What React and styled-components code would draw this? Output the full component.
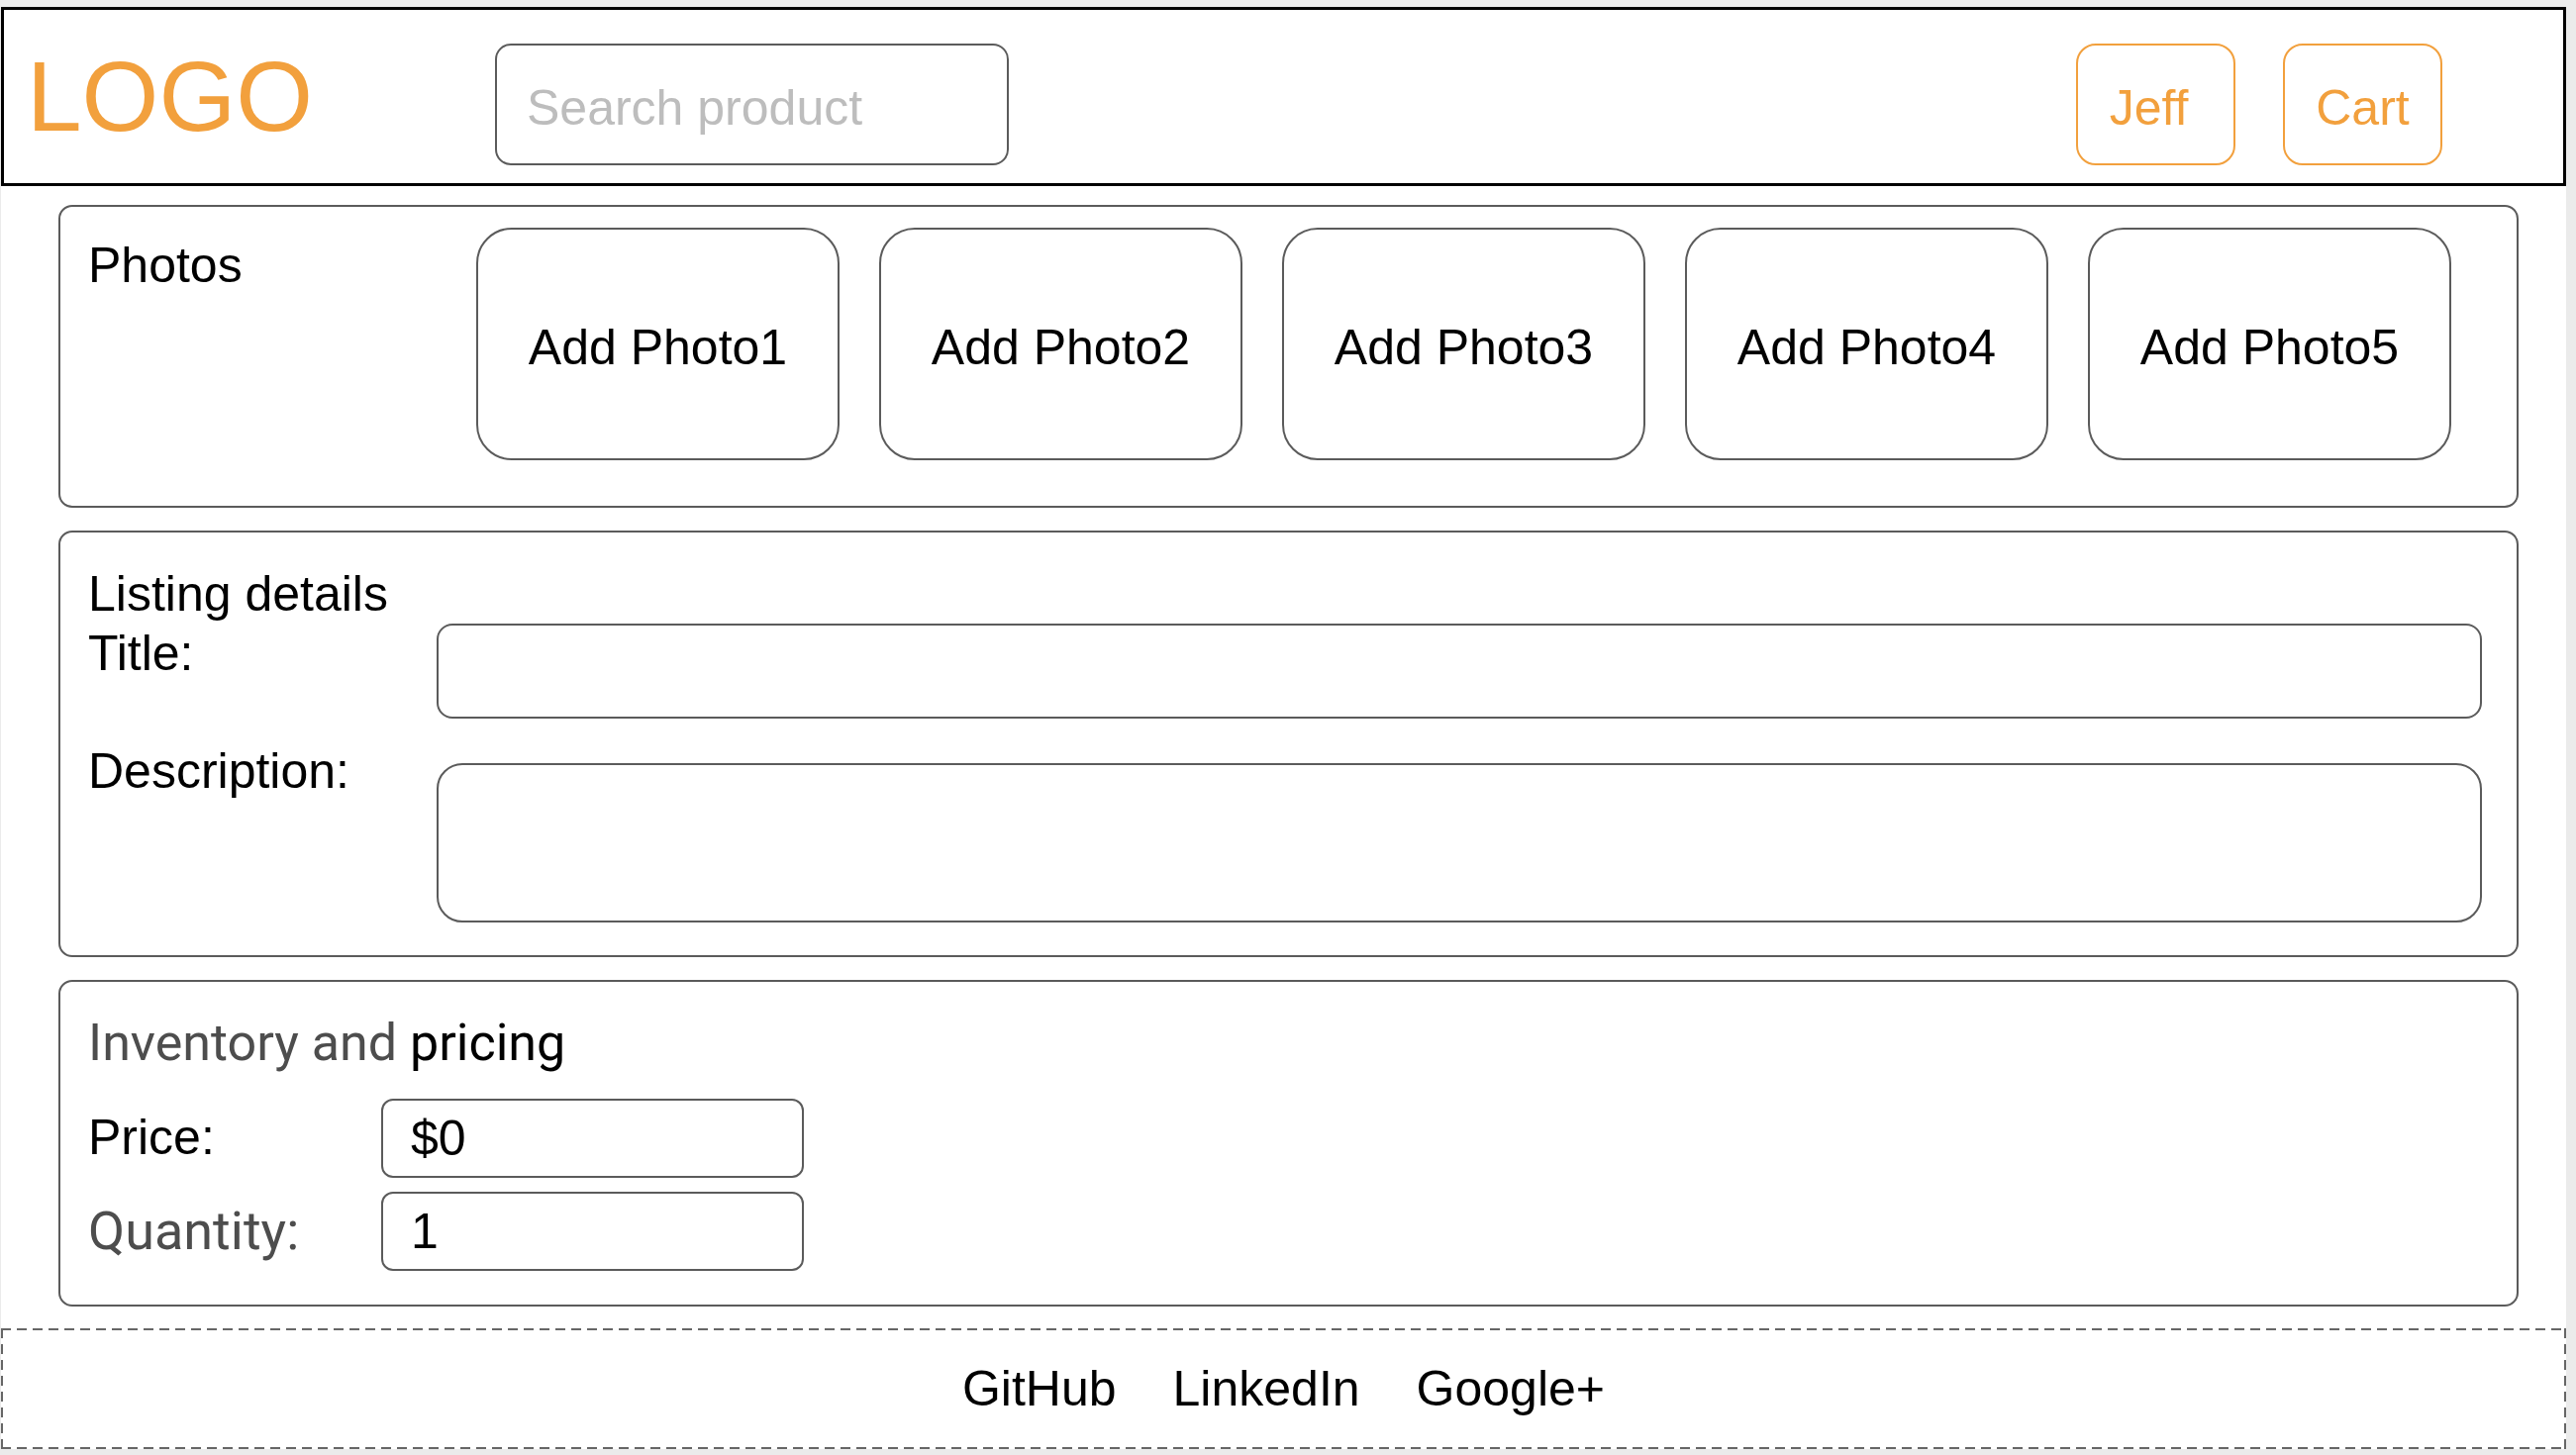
import React from "react"
import styled, { createGlobalStyle } from "styled-components"

const ORANGE = "#f2a03d"
const LINE = "#5b5b5b"
const MUTED = "#4d4d4d"
const SANS = `"Liberation Sans", Arial, sans-serif`
const ROBOTO = `Roboto, "Liberation Sans", sans-serif`

const GlobalStyle = createGlobalStyle`
  * {
    box-sizing: border-box;
  }
  body {
    margin: 0;
    background: #ebebeb;
    font-family: ${SANS};
  }
`

const Canvas = styled.div`
  width: 2591px;
  margin: 7px 0 0 1px;
  background: #fff;
`

const Header = styled.header`
  display: flex;
  align-items: center;
  height: 181px;
  padding-left: 23px;
  border: 3px solid #000;
`

const Logo = styled.div`
  flex: none;
  width: 473px;
  font: 400 100px/115px ${SANS};
  color: ${ORANGE};
`

const Search = styled.input`
  flex: none;
  width: 519px;
  height: 123px;
  margin-top: 16px;
  padding: 6px 30px 0;
  border: 2px solid ${LINE};
  border-radius: 16px;
  background: #fff;
  font: 400 50px ${SANS};
  color: #222;
  outline: none;
  &::placeholder {
    color: #bdbdbd;
  }
`

const Nav = styled.nav`
  display: flex;
  gap: 48px;
  margin: 16px 122px 0 auto;
`

const NavButton = styled.button`
  width: 161px;
  height: 123px;
  padding: 6px ${({ $nudge }) => $nudge || 0}px 0 0;
  border: 2px solid ${ORANGE};
  border-radius: 20px;
  background: #fff;
  color: ${ORANGE};
  font: 400 50px ${SANS};
  cursor: pointer;
`

const Main = styled.main`
  display: flex;
  flex-direction: column;
  gap: 23px;
  padding: 19px 48px 22px 58px;
`

const Panel = styled.section`
  border: 2px solid ${LINE};
  border-radius: 14px;
  background: #fff;
`

const PhotosPanel = styled(Panel)`
  display: flex;
  align-items: flex-start;
  padding: 21px 0 46px 28px;
`

const ListingPanel = styled(Panel)`
  display: flex;
  flex-direction: column;
  padding: 34px 35px 33px 28px;
`

const InventoryPanel = styled(Panel)`
  display: flex;
  flex-direction: column;
  padding: 33px 0 34px 28px;
`

const PanelTitle = styled.h2`
  flex: none;
  width: ${({ $width }) => ($width ? `${$width}px` : "auto")};
  margin: ${({ $offset }) => $offset || 0}px 0 0;
  font: 400 50px/57.5px ${SANS};
  color: #000;
`

const InventoryTitle = styled.h2`
  margin: 0;
  font: 400 52px/57.5px ${ROBOTO};
  color: #000;
`

const Muted = styled.span`
  color: ${MUTED};
`

const PhotoRow = styled.div`
  display: flex;
  gap: 40px;
`

const PhotoSlot = styled.button`
  display: flex;
  align-items: center;
  justify-content: center;
  width: 367px;
  height: 235px;
  padding: 6px 0 0;
  border: 2px solid ${LINE};
  border-radius: 36px;
  background: #fff;
  color: #000;
  font: 400 50px ${SANS};
  cursor: pointer;
`

const FieldRow = styled.div`
  display: flex;
  align-items: ${({ $center }) => ($center ? "center" : "flex-start")};
  margin-top: ${({ $gap }) => $gap || 0}px;
`

const FieldLabel = styled.label`
  flex: none;
  width: ${({ $width }) => $width}px;
  margin-top: ${({ $offset }) => $offset || 0}px;
  font: 400 ${({ $muted }) => ($muted ? `54px/57.5px ${ROBOTO}` : `50px/57.5px ${SANS}`)};
  color: ${({ $muted }) => ($muted ? MUTED : "#000")};
`

const TextField = styled.input`
  flex: 1;
  height: 96px;
  padding: 0 28px;
  border: 2px solid ${LINE};
  border-radius: 16px;
  background: #fff;
  font: 400 50px ${SANS};
  outline: none;
`

const TextArea = styled.textarea`
  flex: 1;
  height: 161px;
  margin-top: 20px;
  padding: 20px 28px;
  border: 2px solid ${LINE};
  border-radius: 26px;
  background: #fff;
  font: 400 50px ${SANS};
  resize: none;
  outline: none;
`

const SmallField = styled.input`
  flex: none;
  width: 427px;
  height: 80px;
  padding: 0 28px;
  border: 2px solid ${LINE};
  border-radius: 12px;
  background: #fff;
  color: #000;
  font: 400 50px ${SANS};
  outline: none;
`

const dash = (dir) =>
  `repeating-linear-gradient(${dir}, #666 0 10px, transparent 10px 16px)`

const Footer = styled.footer`
  display: flex;
  align-items: center;
  justify-content: center;
  gap: 57px;
  height: 122px;
  background: ${dash("90deg")} top / 100% 2px no-repeat,
    ${dash("90deg")} bottom / 100% 2px no-repeat,
    ${dash("180deg")} left / 2px 100% no-repeat,
    ${dash("180deg")} right / 2px 100% no-repeat;
`

const FooterLink = styled.a`
  font: 400 50px ${SANS};
  color: #000;
  text-decoration: none;
`

const photos = [1, 2, 3, 4, 5]

const App = () => (
  <>
    <GlobalStyle />
    <Canvas>
      <Header>
        <Logo>LOGO</Logo>
        <Search placeholder="Search product" />
        <Nav>
          <NavButton $nudge={14}>Jeff</NavButton>
          <NavButton>Cart</NavButton>
        </Nav>
      </Header>

      <Main>
        <PhotosPanel>
          <PanelTitle $width={392} $offset={10}>
            Photos
          </PanelTitle>
          <PhotoRow>
            {photos.map((n) => (
              <PhotoSlot key={n}>Add Photo{n}</PhotoSlot>
            ))}
          </PhotoRow>
        </PhotosPanel>

        <ListingPanel>
          <PanelTitle>Listing details</PanelTitle>
          <FieldRow>
            <FieldLabel $width={352} $offset={2}>
              Title:
            </FieldLabel>
            <TextField />
          </FieldRow>
          <FieldRow $gap={25}>
            <FieldLabel $width={352}>Description:</FieldLabel>
            <TextArea />
          </FieldRow>
        </ListingPanel>

        <InventoryPanel>
          <InventoryTitle>
            <Muted>Inventory and</Muted> pricing
          </InventoryTitle>
          <FieldRow $center $gap={27.5}>
            <FieldLabel $width={296}>Price:</FieldLabel>
            <SmallField defaultValue="$0" />
          </FieldRow>
          <FieldRow $center $gap={14}>
            <FieldLabel $width={296} $muted>
              Quantity:
            </FieldLabel>
            <SmallField defaultValue="1" />
          </FieldRow>
        </InventoryPanel>
      </Main>

      <Footer>
        <FooterLink href="#">GitHub</FooterLink>
        <FooterLink href="#">LinkedIn</FooterLink>
        <FooterLink href="#">Google+</FooterLink>
      </Footer>
    </Canvas>
  </>
)

export default App
